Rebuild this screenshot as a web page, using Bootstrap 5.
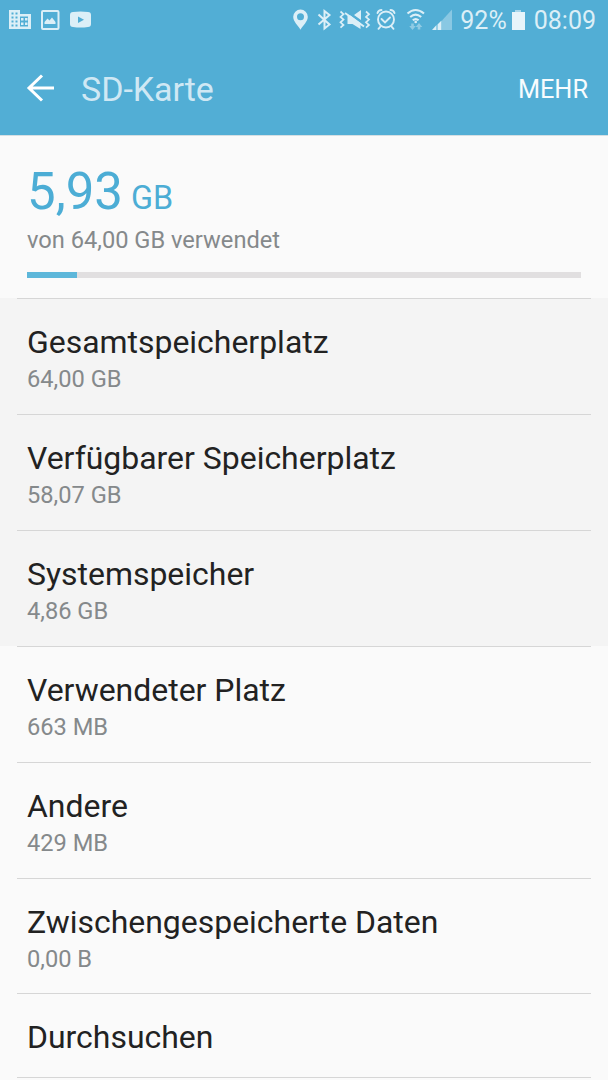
<!DOCTYPE html>
<html lang="de">
<head>
<meta charset="utf-8">
<meta name="viewport" content="width=device-width, initial-scale=1">
<title>SD-Karte</title>
<link href="https://cdn.jsdelivr.net/npm/bootstrap@5.3.0/dist/css/bootstrap.min.css" rel="stylesheet">
<style>
  body { font-family: Roboto, "Liberation Sans", sans-serif; background: #fafafa; color: #222; height: 1080px; overflow: hidden; }
  .app-head { background: #52aed5; height: 135px; }
  .statusbar { height: 40px; color: #dceff7; padding: 0 12px 0 8px; font-size: 25px; line-height: 41px; }
  .statusbar svg { display: block; flex: none; }
  .clock { margin-left: 8px; }
  .toolbar { height: 95px; padding: 0 20px 0 26px; }
  .toolbar h1 { font-size: 34px; line-height: 40px; color: #cfe8f4; letter-spacing: -.05px; margin-left: 26px; padding-top: 3px; }
  .more { font-size: 25.300px; line-height: 30px; color: #f8fcfe; padding-top: 4px; }
  .usage { height: 163px; padding: 26px 27px 0; border-top: 1px solid #d5dfe3; }
  .amount { font-size: 51px; line-height: 60px; height: 60px; color: #4cadd5; }
  .amount small { font-size: 32.300px; }
  .minor { font-size: 23.650px; line-height: 30px; color: #85898b; }
  .usage .minor { margin-top: 3px; }
  .progress { height: 6px; background: #e1dfe0; margin-top: 17px; }
  .progress-bar { background: #5db7da; }
  .entry { height: 115.920px; padding: 24px 27px 0; background: #fafafa; position: relative; }
  .entry::before { content: ""; position: absolute; left: 17px; right: 17px; top: 0; height: 1px; background: #d6d6d6; }
  .shaded { background: #f4f4f4; }
  .entry h2 { font-size: 31.950px; line-height: 40px; }
  .entry .minor { margin-top: 2px; }
  .entry.single { height: 84.480px; }
  .entry.single::after { content: ""; position: absolute; left: 17px; right: 17px; bottom: 0; height: 1px; background: #d6d6d6; }
</style>
</head>
<body>
<header class="app-head">
  <div class="statusbar d-flex justify-content-between">
    <svg width="90" height="40" viewBox="8 0 90 40" fill="currentColor">
      <path fill-rule="evenodd" d="M9 10h11v4h11v15H9zM11.500 12.500v2h2v-2zm4 0v2h2v-2zm-4 4v2h2v-2zm4 0v2h2v-2zm-4 4v2h2v-2zm4 0v2h2v-2zm-4 4v2h2v-2zm4 0v2h2v-2zM20 16.500v10h8v-10z"/>
      <path d="M21 18h2.500v2.500H21zm4 0h2.500v2.500H25zm-4 4.500h2.500V25H21zm4 0h2.500V25H25z"/>
      <rect x="42" y="11" width="16.500" height="18" rx="1" fill="none" stroke="currentColor" stroke-width="2"/>
      <path d="M44.500 24v-2l3-3.500 2 2 2.500-3 3.500 4.500v2z"/>
      <path fill-rule="evenodd" d="M73 12q7.500-1 15 0 3 0 3 3v9q0 3-3 3-7.500 1-15 0-3 0-3-3v-9q0-3 3-3zm5 4.500v6.500l6-3.250z"/>
    </svg>
    <div class="d-flex">
      <svg width="165" height="40" viewBox="291 0 165 40" fill="currentColor">
        <path fill-rule="evenodd" d="M300.500 9.500a7.300 7.300 0 0 1 7.300 7.300c0 5-4.800 8.500-7.300 13-2.500-4.500-7.300-8-7.300-13a7.300 7.300 0 0 1 7.300-7.300zm0 3.700a3.500 3.500 0 1 0 0 7 3.500 3.500 0 0 0 0-7z"/>
        <path fill="none" stroke="currentColor" stroke-width="2" d="M318.500 14.500l11 10-5 4V11l5 4-11 9.500"/>
        <g fill="none" stroke="currentColor" stroke-width="1.700">
          <path d="M340.500 11.500l3 2.700-3 2.700 3 2.700-3 2.700 3 2.700-3 2.700"/>
          <path d="M366 11.500l3 2.700-3 2.700 3 2.700-3 2.700 3 2.700-3 2.700"/>
        </g>
        <path d="M347.500 15.500h3l10 7.500v6l-8-5h-5zM354 15l7-5v10z"/>
        <path fill="none" stroke="currentColor" stroke-width="2" d="M345 13l19 13.500"/>
        <g fill="none" stroke="currentColor" stroke-width="1.900" stroke-linecap="round">
          <circle cx="386" cy="19.500" r="8"/>
          <path d="M381.500 19l3.500 3.500 5-5M377.500 13q1-3 4-3M394.500 13q-1-3-4-3M380.500 26.500l-2 2.300M391.500 26.500l2 2.300"/>
        </g>
        <g fill="none" stroke="currentColor" stroke-width="2.100">
          <path d="M407.500 13.500q8-7 16.500 0M410.200 17q5.400-4.800 11 0M412.800 20.300q2.900-2.500 5.800 0"/>
        </g>
        <circle cx="415.700" cy="22" r="1.300"/>
        <path opacity=".45" d="M411.200 23.500h2.600v2.500h2l-3.300 4-3.300-4h2zM417.700 29.500h2.600v-2.500h2l-3.300-4-3.300 4h2z"/>
        <path opacity=".4" d="M442 20.500L452 9.500V30h-10z"/>
        <path d="M432 30l4.500-5v5zM437.500 24.500l4-4V30h-4z"/>
      </svg>
      <span class="ms-1">92%</span>
      <svg width="15" height="40" viewBox="0 0 15 40" fill="#e6f4fa" class="ms-1"><path fill="#a9d7eb" d="M4 10h6v2H4z"/><path d="M1 12h13v18H1z"/></svg>
      <span class="clock">08:09</span>
    </div>
  </div>
  <div class="toolbar d-flex align-items-center">
    <svg width="29" height="28" viewBox="26 74 29 28" fill="none" stroke="#fff" stroke-width="3"><path d="M54 88H29M42 75.500L29 88l13 12.500"/></svg>
    <h1 class="fw-normal mb-0">SD-Karte</h1>
    <span class="more ms-auto">MEHR</span>
  </div>
</header>
<main>
  <section class="usage">
    <div class="amount">5,93<small> GB</small></div>
    <div class="minor">von 64,00 GB verwendet</div>
    <div class="progress rounded-0"><div class="progress-bar" style="width:9.0%"></div></div>
  </section>
  <section class="entry shaded"><h2 class="fw-normal mb-0">Gesamtspeicherplatz</h2><div class="minor">64,00 GB</div></section>
  <section class="entry shaded"><h2 class="fw-normal mb-0">Verfügbarer Speicherplatz</h2><div class="minor">58,07 GB</div></section>
  <section class="entry shaded"><h2 class="fw-normal mb-0">Systemspeicher</h2><div class="minor">4,86 GB</div></section>
  <section class="entry"><h2 class="fw-normal mb-0">Verwendeter Platz</h2><div class="minor">663 MB</div></section>
  <section class="entry"><h2 class="fw-normal mb-0">Andere</h2><div class="minor">429 MB</div></section>
  <section class="entry"><h2 class="fw-normal mb-0">Zwischengespeicherte Daten</h2><div class="minor">0,00 B</div></section>
  <section class="entry single"><h2 class="fw-normal mb-0">Durchsuchen</h2></section>
</main>
<script src="https://cdn.jsdelivr.net/npm/bootstrap@5.3.0/dist/js/bootstrap.bundle.min.js"></script>
</body>
</html>
